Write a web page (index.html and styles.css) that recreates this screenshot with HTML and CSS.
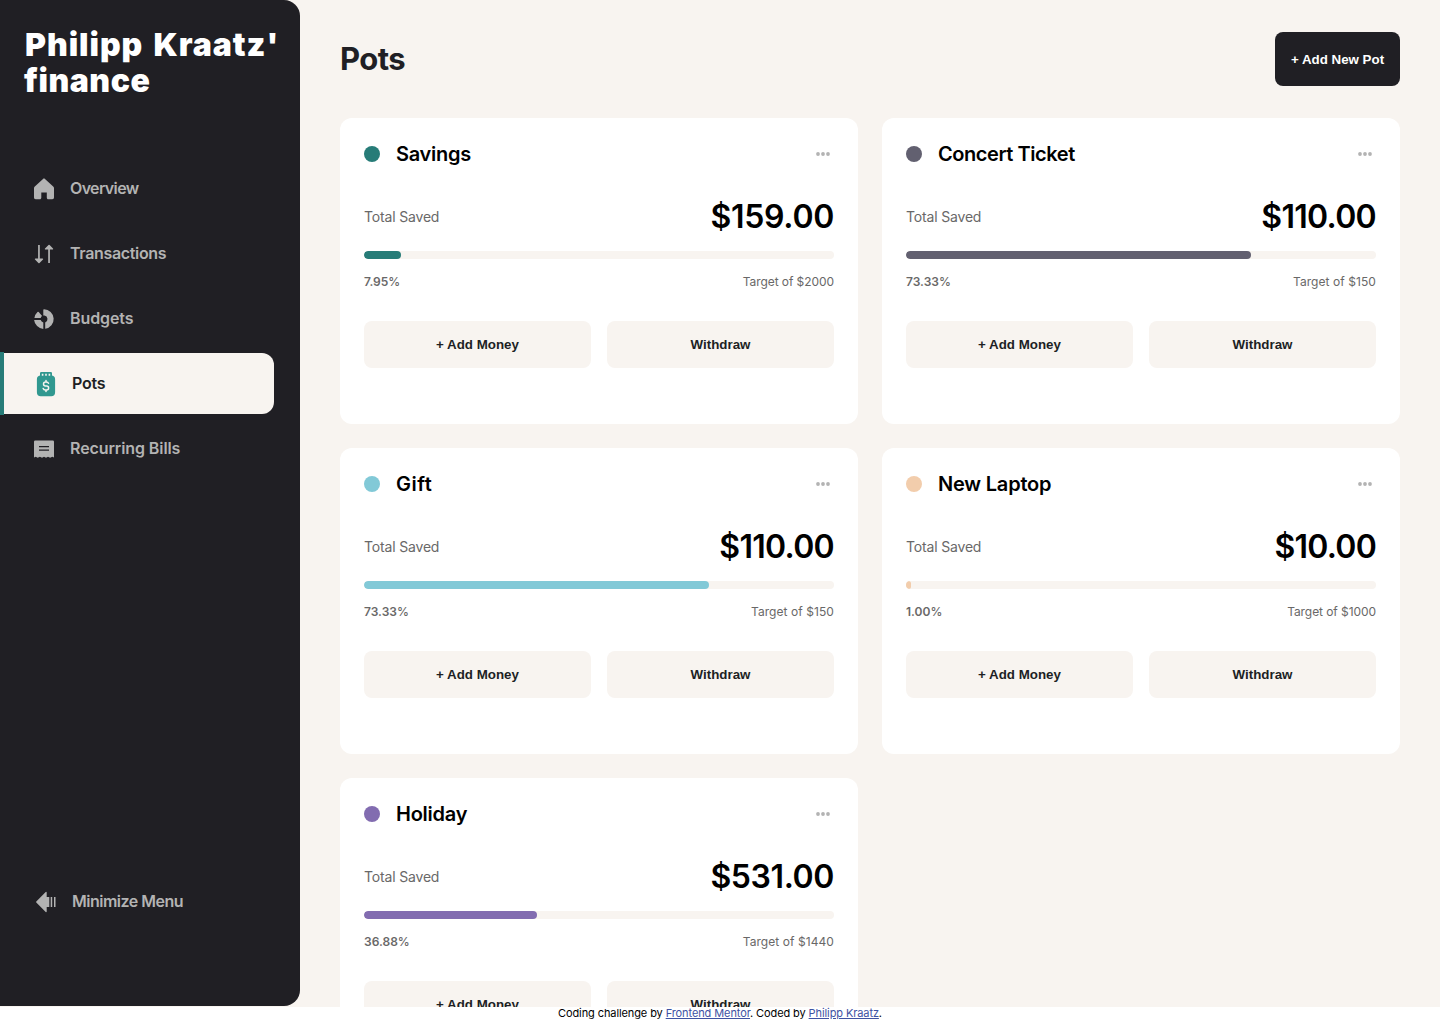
FILE: index.html
```html
<!DOCTYPE html>
<html lang="en">
<head>
<meta charset="utf-8">
<title>Pots</title>
<link rel="stylesheet" href="styles.css">
</head>
<body>
<div class="app">
  <aside class="sidebar">
    <div class="logo"><span class="logo-a">Philipp Kraatz'</span><span class="logo-b">finance</span></div>
    <nav class="nav">
      <a class="item"><svg width="24" height="24" viewBox="0 0 24 24"><path d="M12 1.500c.4 0 .7.100 1 .400l8.200 7.500c.5.500.8 1.100.8 1.700v9.400c0 1-.7 1.700-1.700 1.700h-4c-1 0-1.500-.7-1.500-1.500v-5.200H9.300v5.200c0 .9-.6 1.500-1.500 1.500H3.700c-1 0-1.700-.7-1.700-1.700v-9.400c0-.6.300-1.200.8-1.700L11 1.900c.3-.3.600-.4 1-.4Z"/></svg><span class="t-overview">Overview</span></a>
      <a class="item"><svg width="24" height="24" viewBox="0 0 24 24"><path d="M6.100 3h1.700v13.400h2.700c.6 0 .9.600.5 1.100l-3.500 3.400a.8.800 0 0 1-1.100 0L3 17.500c-.4-.5-.1-1.100.5-1.100h2.600ZM16.200 21V7.600h-2.700c-.6 0-.9-.6-.5-1.100l3.500-3.400a.8.800 0 0 1 1.100 0L21 6.500c.4.500.1 1.100-.5 1.100h-2.600V21Z"/></svg><span class="t-transactions">Transactions</span></a>
      <a class="item"><svg width="24" height="24" viewBox="0 0 24 24"><path d="M12 2.200a9.850 9.850 0 0 1 1.200 19.600V15.400a3.600 3.600 0 0 0-.7-6.900H11.300V2.900q0-.7.700-.7ZM11.300 15.400v6.500A10 10 0 0 1 2.100 13H8.700a3.600 3.600 0 0 0 2.600 2.400ZM2.400 11A10 10 0 0 1 5.500 5q.6-.5 1.200.1L10.100 9Q9 9.700 8.700 11Z"/></svg><span class="t-budgets">Budgets</span></a>
      <a class="item active"><svg width="24" height="26" viewBox="0 0 24 26"><path fill="#319890" d="M6 4.500V2.200Q6 1 7.200 1h9.600Q18 1 18 2.200v2.300q3.100.6 3.100 3.800v13q0 3.900-3.900 3.900H6.800q-3.900 0-3.900-3.900v-13Q2.900 5.100 6 4.500Z"/><path stroke="#f8f4f0" stroke-width="1.600" d="M8.600 2.700v2M12 2.700v2M15.400 2.700v2"/><path fill="none" stroke="#f8f4f0" stroke-width="1.500" stroke-linecap="round" stroke-linejoin="round" d="M14.500 12.300Q13.900 11 12.200 11H11.500a1.900 1.900 0 0 0 0 3.900h1.100a2 2 0 0 1 0 4H11.400Q9.700 18.900 9.200 17.400M12 9.500V11M12 18.900v1.500"/></svg><span class="t-pots">Pots</span></a>
      <a class="item"><svg width="24" height="24" viewBox="0 0 24 24"><path fill-rule="evenodd" d="M3.200 3.500h17.600q1.200 0 1.200 1.200v15.800l-1.700-.8-2.200 1.100-2.100-1.100-2 1.100-2-1.100-2 1.100-2.100-1.100-2.200 1.100-2-1.100-1.700.8V4.700q0-1.200 1.200-1.200ZM7 8.900v1.400h10V8.900Zm0 3.500v1.400h10v-1.400Z"/></svg><span class="t-bills">Recurring Bills</span></a>
    </nav>
    <a class="minimize"><svg width="24" height="24" viewBox="0 0 24 24"><path d="M12.700 2.300v4.800h2.600v9.800h-2.600v4.800q-.4.800-1 .2L2.300 12.500q-.5-.5 0-1l9.400-9.400q.6-.6 1 .2ZM16.700 7.100h1.500v9.800h-1.500ZM20 7.100h1.500v9.800H20Z"/></svg><span class="t-minimize">Minimize Menu</span></a>
  </aside>
  <main class="main">
    <header class="header"><h1>Pots</h1><button class="add">+ Add New Pot</button></header>
    <section class="grid">
      <article class="card">
        <div class="top"><i class="dot green"></i><h2 class="n-savings">Savings</h2><svg class="more" width="14" height="4" viewBox="0 0 14 4"><circle cx="2" cy="2" r="1.900"/><circle cx="7" cy="2" r="1.900"/><circle cx="12" cy="2" r="1.900"/></svg></div>
        <div class="total"><span>Total Saved</span><strong class="a-159">$159.00</strong></div>
        <div class="bar"><div class="fill green" style="width:7.95%"></div></div>
        <div class="meta"><b>7.95<em>%</em></b><span class="wide">Target of $2000</span></div>
        <div class="actions"><button>+ Add Money</button><button>Withdraw</button></div>
      </article>
      <article class="card">
        <div class="top"><i class="dot gray"></i><h2 class="n-concert">Concert Ticket</h2><svg class="more" width="14" height="4" viewBox="0 0 14 4"><circle cx="2" cy="2" r="1.900"/><circle cx="7" cy="2" r="1.900"/><circle cx="12" cy="2" r="1.900"/></svg></div>
        <div class="total"><span>Total Saved</span><strong class="a-110">$110.00</strong></div>
        <div class="bar"><div class="fill gray" style="width:73.33%"></div></div>
        <div class="meta"><b>73.33<em>%</em></b><span class="narrow">Target of $150</span></div>
        <div class="actions"><button>+ Add Money</button><button>Withdraw</button></div>
      </article>
      <article class="card">
        <div class="top"><i class="dot cyan"></i><h2 class="n-gift">Gift</h2><svg class="more" width="14" height="4" viewBox="0 0 14 4"><circle cx="2" cy="2" r="1.900"/><circle cx="7" cy="2" r="1.900"/><circle cx="12" cy="2" r="1.900"/></svg></div>
        <div class="total"><span>Total Saved</span><strong class="a-110">$110.00</strong></div>
        <div class="bar"><div class="fill cyan" style="width:73.33%"></div></div>
        <div class="meta"><b>73.33<em>%</em></b><span class="narrow">Target of $150</span></div>
        <div class="actions"><button>+ Add Money</button><button>Withdraw</button></div>
      </article>
      <article class="card">
        <div class="top"><i class="dot peach"></i><h2 class="n-laptop">New Laptop</h2><svg class="more" width="14" height="4" viewBox="0 0 14 4"><circle cx="2" cy="2" r="1.900"/><circle cx="7" cy="2" r="1.900"/><circle cx="12" cy="2" r="1.900"/></svg></div>
        <div class="total"><span>Total Saved</span><strong class="a-10">$10.00</strong></div>
        <div class="bar"><div class="fill peach" style="width:1%"></div></div>
        <div class="meta"><b>1.00<em>%</em></b><span class="wide">Target of $1000</span></div>
        <div class="actions"><button>+ Add Money</button><button>Withdraw</button></div>
      </article>
      <article class="card">
        <div class="top"><i class="dot purple"></i><h2 class="n-holiday">Holiday</h2><svg class="more" width="14" height="4" viewBox="0 0 14 4"><circle cx="2" cy="2" r="1.900"/><circle cx="7" cy="2" r="1.900"/><circle cx="12" cy="2" r="1.900"/></svg></div>
        <div class="total"><span>Total Saved</span><strong class="a-531">$531.00</strong></div>
        <div class="bar"><div class="fill purple" style="width:36.88%"></div></div>
        <div class="meta"><b>36.88<em>%</em></b><span class="narrow">Target of $1440</span></div>
        <div class="actions"><button>+ Add Money</button><button>Withdraw</button></div>
      </article>
    </section>
  </main>
</div>
<footer class="footer">Coding challenge by <a href="#">Frontend Mentor</a>. Coded by <a href="#">Philipp Kraatz</a>.</footer>
</body>
</html>
```
FILE: styles.css
```css
* { box-sizing: border-box; }
body { margin: 0; height: 1019px; overflow: hidden; background: #fff; font-family: Inter, "Liberation Sans", sans-serif; color: #000; }
h1, h2 { margin: 0; }
.app { display: flex; height: 1007px; overflow: hidden; background: #f8f4f0; }
.sidebar { width: 300px; height: 1006px; flex: none; display: flex; flex-direction: column; background: #201f24; border-radius: 0 16px 16px 0; color: #b3b3b3; }
.logo { height: 158px; padding: 27px 0 0 24px; display: flex; flex-direction: column; align-items: flex-start; font-size: 32px; font-weight: 900; line-height: 36px; color: #fff; white-space: nowrap; }
.logo-a { padding-left: 1px; letter-spacing: 0.95px; word-spacing: 3px; }
.logo-b { letter-spacing: 0.5px; }
.nav { display: flex; flex-direction: column; gap: 4px; flex: 1; }
.item { height: 61px; padding-left: 32px; display: flex; align-items: center; gap: 14px; width: 274px; font-size: 16px; font-weight: 600; }
.item span, .minimize span { padding-bottom: 1px; }
.item svg, .minimize svg { flex: none; fill: #b3b3b3; }
.item.active { position: relative; padding-left: 34px; background: #f8f4f0; color: #201f24; border-radius: 0 12px 12px 0; }
.item.active::before { content: ""; position: absolute; left: 0; top: -1px; bottom: -1px; width: 4px; background: #277c78; }
.t-overview { letter-spacing: -0.65px; }
.t-transactions { letter-spacing: -0.34px; }
.t-budgets { letter-spacing: -0.1px; }
.t-pots { letter-spacing: -0.25px; }
.t-bills { letter-spacing: -0.1px; }
.t-minimize { letter-spacing: -0.5px; }
.minimize { height: 61px; margin-bottom: 74px; padding-left: 34px; display: flex; align-items: center; gap: 14px; font-size: 16px; font-weight: 600; }
.main { flex: 1; padding: 32px 40px 0; overflow: hidden; }
.header { height: 54px; display: flex; align-items: center; justify-content: space-between; margin-bottom: 32px; }
h1 { font-size: 31px; font-weight: 700; color: #201f24; line-height: 38px; letter-spacing: -0.6px; }
button { border: 0; border-radius: 8px; font-family: "Liberation Sans", Arial, sans-serif; font-size: 13.333px; font-weight: 700; padding: 0; }
.add { width: 125px; height: 54px; background: #201f24; color: #fff; }
.grid { display: grid; grid-template-columns: 1fr 1fr; gap: 24px; }
.card { height: 306px; padding: 24px; background: #fff; border-radius: 12px; }
.top { height: 24px; display: flex; align-items: center; margin-bottom: 31px; }
.dot { width: 16px; height: 16px; border-radius: 50%; margin-right: 16px; }
h2 { font-size: 20px; font-weight: 600; line-height: 24px; }
.n-savings { letter-spacing: -0.28px; }
.n-concert { letter-spacing: -0.44px; }
.n-gift { letter-spacing: 0.5px; }
.n-laptop { letter-spacing: -0.2px; }
.n-holiday { letter-spacing: -0.25px; }
.more { margin: 0 4px 0 auto; fill: #b3b3b3; }
.total { height: 38px; display: flex; align-items: center; justify-content: space-between; margin-bottom: 16px; font-size: 14px; letter-spacing: -0.17px; color: #696868; }
.total strong { font-size: 32px; font-weight: 600; color: #000; }
.total .a-159 { letter-spacing: -0.3px; }
.total .a-110 { letter-spacing: -0.7px; }
.total .a-10 { letter-spacing: -0.75px; }
.total .a-531 { letter-spacing: -0.4px; }
.bar { height: 8px; border-radius: 4px; background: #f8f4f0; overflow: hidden; margin-bottom: 13px; }
.fill { height: 8px; border-radius: 4px; }
.meta { height: 18px; display: flex; align-items: center; justify-content: space-between; margin-bottom: 31px; font-size: 12px; color: #696868; }
.meta b { font-weight: 600; }
.meta em { font-style: normal; font-weight: 500; }
.wide { letter-spacing: -0.07px; }
.narrow { letter-spacing: 0.07px; }
.actions { display: grid; grid-template-columns: 1fr 1fr; gap: 16px; }
.actions button { height: 47px; background: #f8f4f0; color: #201f24; }
.green { background: #277c78; }
.gray { background: #626070; }
.cyan { background: #82c9d7; }
.peach { background: #f2cdac; }
.purple { background: #826cb0; }
.footer { height: 12px; font-size: 11px; line-height: 13px; letter-spacing: -0.1px; text-align: center; }
.footer a { color: #3e52a3; }
```
